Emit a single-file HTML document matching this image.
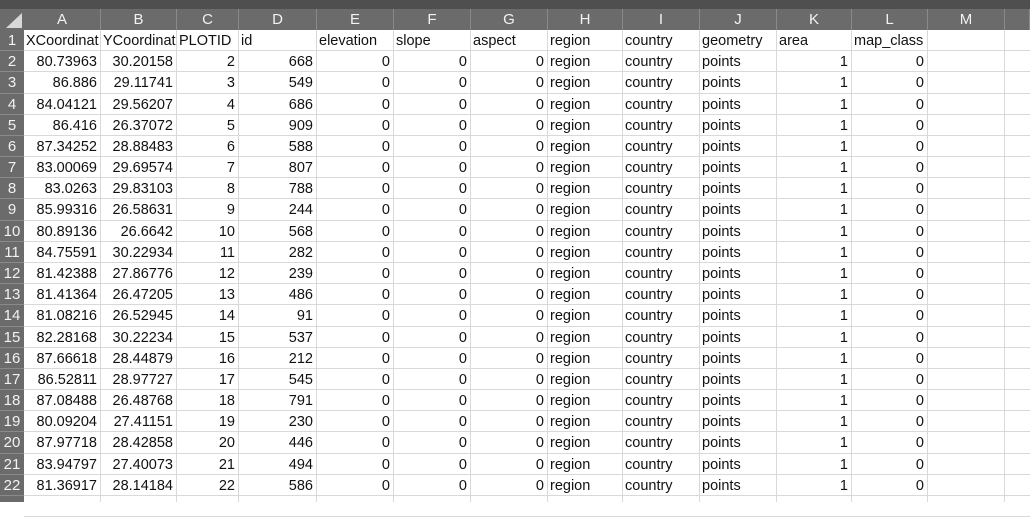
<!DOCTYPE html>
<html><head><meta charset="utf-8"><style>
html,body{margin:0;width:1030px;height:502px;overflow:hidden;background:#fff;font-family:"Liberation Sans",sans-serif;}
#top{position:absolute;left:0;top:0;width:1030px;height:9px;background:#4f4f4f;}
#hdr{position:absolute;left:0;top:9px;width:1030px;height:21px;background:#6b6b6b;}
#rh{position:absolute;left:0;top:9px;width:24px;height:493px;background:#6b6b6b;}
.c{position:absolute;font-size:14.5px;color:#111;white-space:nowrap;overflow:hidden;line-height:22px;height:21px;}
.h{position:absolute;color:#f2f2f2;font-size:15px;text-align:center;line-height:21px;top:9px;height:21px;border-right:1px solid #8a8a8a;box-sizing:border-box;}
.rn{position:absolute;left:0;width:24px;color:#f2f2f2;font-size:15px;text-align:center;line-height:21px;border-bottom:1px solid #8a8a8a;box-sizing:border-box;}
.vl{position:absolute;top:30px;width:1px;height:472px;background:#d9d9d9;}
.hl{position:absolute;left:24px;width:1006px;height:1px;background:#d9d9d9;}
.r{text-align:right;}
</style></head><body>
<div id="top"></div><div id="hdr"></div><div id="rh"></div>
<svg style="position:absolute;left:4px;top:12px" width="19" height="17"><polygon points="18,1 18,16 2,16" fill="#d8d8d8"/></svg>
<div id="g"></div>
<script>
const cols=[24,101,177,239,317,394,471,548,623,700,777,852,928,1005,1030];
const L="ABCDEFGHIJKLM";
const data=[
["80.73963","30.20158",2,668],["86.886","29.11741",3,549],["84.04121","29.56207",4,686],["86.416","26.37072",5,909],["87.34252","28.88483",6,588],["83.00069","29.69574",7,807],["83.0263","29.83103",8,788],["85.99316","26.58631",9,244],["80.89136","26.6642",10,568],["84.75591","30.22934",11,282],["81.42388","27.86776",12,239],["81.41364","26.47205",13,486],["81.08216","26.52945",14,91],["82.28168","30.22234",15,537],["87.66618","28.44879",16,212],["86.52811","28.97727",17,545],["87.08488","26.48768",18,791],["80.09204","27.41151",19,230],["87.97718","28.42858",20,446],["83.94797","27.40073",21,494],["81.36917","28.14184",22,586]];
let h="";
const RH=21.18,T0=30;
for(let i=0;i<14;i++){h+=`<div class="h" style="left:${cols[i]}px;width:${cols[i+1]-cols[i]}px">${i<13?L[i]:""}</div>`;}
for(let i=1;i<14;i++)h+=`<div class="vl" style="left:${cols[i]-1}px"></div>`;
for(let r=0;r<23;r++){const y=T0+r*RH;if(y>502)break;h+=`<div class="hl" style="top:${(y+RH-1).toFixed(2)}px"></div>`;if(r<22)h+=`<div class="rn" style="top:${y.toFixed(2)}px;height:${RH}px">${r+1}</div>`;}
function cell(ci,y,t,right){const w=cols[ci+1]-cols[ci];h+=`<div class="c${right?' r':''}" style="left:${cols[ci]+2}px;width:${w-6}px;top:${y.toFixed(2)}px">${t}</div>`;}
const head=["XCoordinat","YCoordinat","PLOTID","id","elevation","slope","aspect","region","country","geometry","area","map_class"];
head.forEach((t,i)=>{h+=`<div class="c" style="left:${cols[i]+2}px;width:${cols[i+1]-cols[i]-1}px;top:${T0}px">${t}</div>`;});
data.forEach((d,k)=>{const y=T0+(k+1)*RH;
const v=[d[0],d[1],d[2],d[3],0,0,0,"region","country","points",1,0];
v.forEach((t,i)=>cell(i,y,t,!(i>=7&&i<=9)));});
document.getElementById("g").innerHTML=h;
</script>
</body></html>
